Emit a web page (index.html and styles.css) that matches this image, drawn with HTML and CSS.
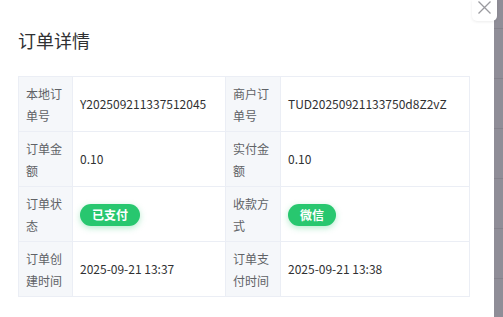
FILE: index.html
```html
<!DOCTYPE html>
<html lang="zh">
<head>
<meta charset="utf-8">
<link rel="stylesheet" href="styles.css">
</head>
<body>
<div class="page">
  <div class="modal">
    <h2 class="title">订单详情</h2>
    <table class="detail">
      <tr>
        <th>本地订单号</th>
        <td>Y202509211337512045</td>
        <th>商户订单号</th>
        <td>TUD20250921133750d8Z2vZ</td>
      </tr>
      <tr>
        <th>订单金额</th>
        <td>0.10</td>
        <th>实付金额</th>
        <td>0.10</td>
      </tr>
      <tr>
        <th>订单状态</th>
        <td><span class="tag">已支付</span></td>
        <th>收款方式</th>
        <td><span class="tag">微信</span></td>
      </tr>
      <tr>
        <th>订单创建时间</th>
        <td>2025-09-21 13:37</td>
        <th>订单支付时间</th>
        <td>2025-09-21 13:38</td>
      </tr>
    </table>
    <button class="close" aria-label="关闭">
      <svg width="13" height="13" viewBox="0 0 13 13"><path d="M0.5 0.5L12.5 12.5M12.5 0.5L0.5 12.5" stroke="#9a9a9f" stroke-width="1.3" fill="none"/></svg>
    </button>
  </div>
</div>
</body>
</html>
```
FILE: styles.css
```css
html, body {
  margin: 0;
  padding: 0;
  width: 503px;
  height: 317px;
  overflow: hidden;
}
body {
  font-family: "Noto Sans CJK SC", "Noto Sans", sans-serif;
  background-color: #8f8d97;
  background-image: repeating-linear-gradient(to bottom, transparent 0, transparent 28px, #84828c 28px, #84828c 29px, transparent 29px, transparent 50px);
  background-position: 0 0;
}
.page {
  display: flex;
  height: 317px;
}
.modal {
  position: relative;
  width: 494px;
  height: 317px;
  background: #fff;
  box-sizing: border-box;
  padding: 0 24px 0 18px;
}
.title {
  margin: 0;
  padding-top: 29px;
  height: 76px;
  box-sizing: border-box;
  font-size: 18px;
  line-height: 22px;
  font-weight: 400;
  color: #303133;
}
.detail {
  border-collapse: collapse;
  width: 452px;
  table-layout: fixed;
  border: 1px solid #ebeef5;
}
.detail th, .detail td {
  border: 1px solid #ebeef5;
  height: 44px;
  padding: 5px 7px;
  font-size: 12px;
  line-height: 22px;
  text-align: left;
  vertical-align: middle;
}
.detail th {
  background: #f5f7fa;
  color: #606266;
  font-weight: 400;
  width: 39px;
  vertical-align: top;
  padding-top: 6px;
  padding-bottom: 4px;
}
.detail td {
  color: #303133;
}
.detail tr > :nth-child(2) { width: 138px; }
.detail tr > :nth-child(3) { width: 40px; }
.tag {
  display: inline-flex;
  align-items: center;
  height: 22px;
  padding: 0 12px;
  border-radius: 11px;
  background: #28c76f;
  color: #fff;
  font-weight: 700;
  font-size: 12px;
  box-shadow: 0 2px 6px rgba(40, 199, 111, 0.35);
  vertical-align: middle;
}
.close {
  position: absolute;
  top: 0;
  left: 472px;
  width: 25px;
  height: 21px;
  border: none;
  padding: 1px 0 0;
  box-sizing: border-box;
  background: #fff;
  border-radius: 0 0 5px 5px;
  box-shadow: 0 1px 3px rgba(0, 0, 0, 0.08);
  display: flex;
  align-items: flex-start;
  justify-content: center;
}
```
